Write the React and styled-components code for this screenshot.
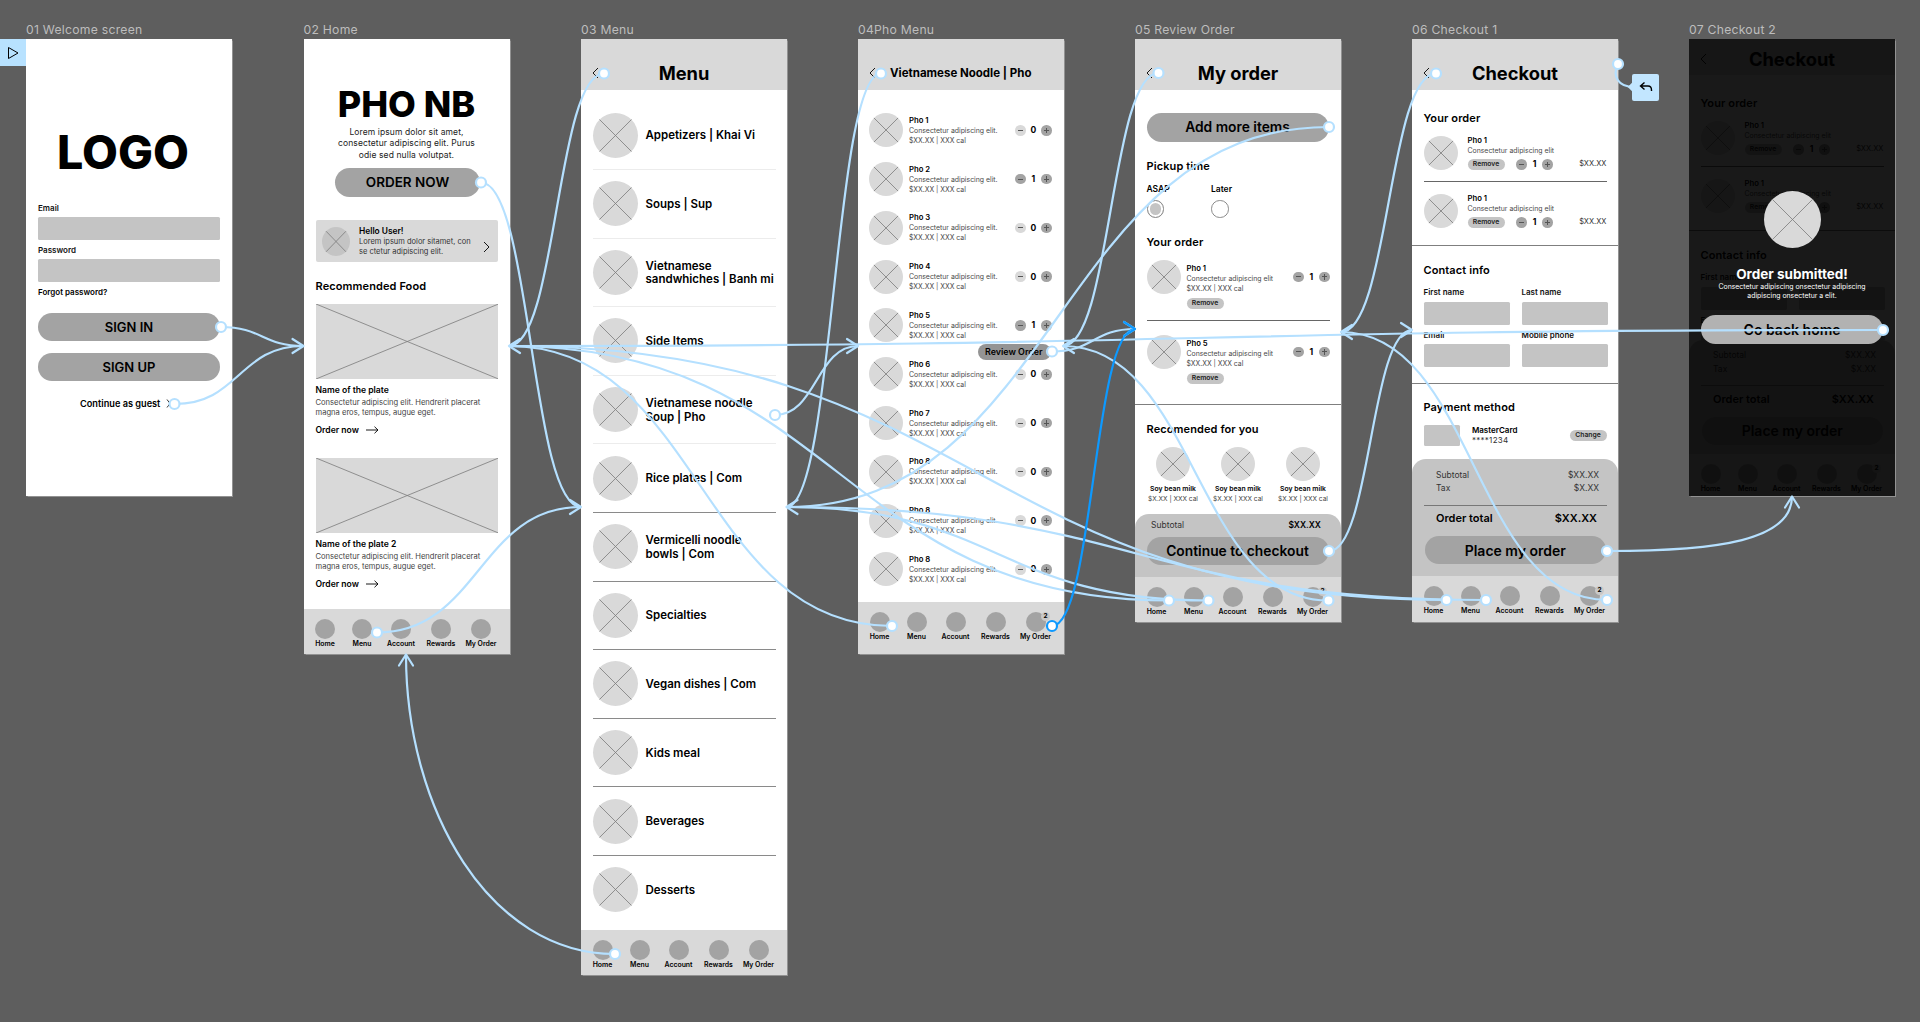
import React from "react";
import styled, { createGlobalStyle } from "styled-components";

const Global = createGlobalStyle`
  html, body { margin: 0; padding: 0; background: #5e5e5e; }
  body { font-family: Inter, "Liberation Sans", sans-serif; color: #000; }
  * { box-sizing: border-box; }
`;

const Canvas = styled.div`
  position: relative;
  width: 1920px;
  height: 1022px;
  background: #5e5e5e;
  overflow: hidden;
`;
const FrameSlot = styled.section`
  position: absolute;
  left: ${(p) => p.$x}px;
  top: ${(p) => p.$y}px;
  width: ${(p) => p.$w}px;
  height: ${(p) => p.$h}px;
`;
const FrameLabel = styled.div`
  position: absolute;
  left: 0;
  top: -17px;
  font-size: 12.2px;
  line-height: 15px;
  letter-spacing: 0.25px;
  color: #bdbdbd;
  white-space: nowrap;
`;
const Screen = styled.div`
  position: relative;
  width: 100%;
  height: 100%;
  background: #fff;
  display: flex;
  flex-direction: column;
  overflow: hidden;
  box-shadow: 0 0 1px 0.5px rgba(190, 190, 190, 0.55);
`;
const Padded = styled.div`
  display: flex;
  flex-direction: column;
  padding: 0 12px;
`;

/* shared atoms */
const ThumbBox = styled.div`
  flex: none;
  width: ${(p) => p.$w}px;
  height: ${(p) => p.$h}px;
  margin-top: ${(p) => p.$mt || 0}px;
  background: ${(p) => p.$bg || "#d9d9d9"};
  border-radius: ${(p) => (p.$rect ? "0" : "50%")};
  svg { display: block; width: 100%; height: 100%; }
`;
const Thumb = ({ w, h, rect, mt, bg }) => {
  const a = rect ? 0 : 14.5;
  const b = 100 - a;
  return (
    <ThumbBox $w={w} $h={h || w} $rect={rect} $mt={mt} $bg={bg}>
      <svg viewBox="0 0 100 100" preserveAspectRatio="none">
        <line x1={a} y1={a} x2={b} y2={b} stroke="#7b7b7b" strokeWidth="0.8" vectorEffect="non-scaling-stroke" />
        <line x1={b} y1={a} x2={a} y2={b} stroke="#7b7b7b" strokeWidth="0.8" vectorEffect="non-scaling-stroke" />
      </svg>
    </ThumbBox>
  );
};
const Pill = styled.div`
  flex: none;
  display: flex;
  align-items: center;
  justify-content: center;
  width: ${(p) => p.$w || 183}px;
  height: ${(p) => p.$h || 28.5}px;
  margin-top: ${(p) => p.$mt || 0}px;
  margin-left: ${(p) => p.$ml || 0}px;
  border-radius: 15px;
  background: ${(p) => p.$bg || "#a3a3a3"};
  font-size: ${(p) => p.$fs || 13}px;
  font-weight: 600;
  white-space: nowrap;
`;
const Field = styled.div`
  flex: none;
  height: ${(p) => p.$h || 22.5}px;
  margin-top: ${(p) => p.$mt || 4.5}px;
  background: #c4c4c4;
  border-radius: 1.5px;
`;
const FieldLabel = styled.div`
  font-size: 8px;
  line-height: 9px;
  font-weight: 600;
  margin-top: ${(p) => p.$mt || 0}px;
  color: #111;
`;
const Heading = styled.div`
  font-size: 11px;
  line-height: 12px;
  font-weight: 600;
  letter-spacing: 0.1px;
  margin-top: ${(p) => p.$mt || 0}px;
`;

/* header */
const TopBar = styled.header`
  flex: none;
  height: ${(p) => p.$h || 51}px;
  padding: ${(p) => p.$pt ?? 16}px 11px 0;
  background: #d9d9d9;
  display: grid;
  grid-template-columns: 24px 1fr 24px;
  align-items: center;
  svg { display: block; }
`;
const TopTitle = styled.h1`
  margin: 0 0 0 ${(p) => p.$ml || 0}px;
  font-size: ${(p) => p.$fs || 18.3}px;
  line-height: 24px;
  font-weight: 700;
  text-align: ${(p) => (p.$left ? "left" : "center")};
  white-space: nowrap;
`;
const Header = ({ title, left, fs, ml, h, pt }) => (
  <TopBar $h={h} $pt={pt}>
    <svg width="7" height="12" viewBox="0 0 7 12" fill="none">
      <path d="M6 1 1 6l5 5" stroke="#000" strokeWidth="0.9" />
    </svg>
    <TopTitle $left={left} $fs={fs} $ml={ml}>{title}</TopTitle>
  </TopBar>
);

/* bottom nav */
const NavBar = styled.nav`
  flex: none;
  margin-top: ${(p) => (p.$flush ? "0" : "auto")};
  height: ${(p) => p.$h || 45}px;
  padding: 9.5px 0 0 3.5px;
  background: #d9d9d9;
  display: grid;
  grid-template-columns: 36px 38px 40px 40px 40px;
  align-items: start;
`;
const NavItem = styled.div`
  display: flex;
  flex-direction: column;
  align-items: center;
`;
const NavDot = styled.div`
  position: relative;
  width: 20px;
  height: 20px;
  border-radius: 50%;
  background: #a3a3a3;
`;
const NavBadge = styled.span`
  position: absolute;
  left: 15.5px;
  top: 0;
  width: 9px;
  height: 9px;
  border-radius: 50%;
  background: #c8c8c8;
  font-size: 6.5px;
  line-height: 9px;
  font-weight: 700;
  text-align: center;
`;
const NavText = styled.div`
  margin-top: 1.5px;
  font-size: 6.9px;
  line-height: 8px;
  font-weight: 600;
  white-space: nowrap;
`;
const Nav = ({ badge, h, flush }) => (
  <NavBar $h={h} $flush={flush}>
    {["Home", "Menu", "Account", "Rewards", "My Order"].map((n, i) => (
      <NavItem key={n}>
        <NavDot>{badge && i === 4 && <NavBadge>2</NavBadge>}</NavDot>
        <NavText>{n}</NavText>
      </NavItem>
    ))}
  </NavBar>
);

/* stepper */
const StepGrid = styled.div`
  flex: none;
  align-self: ${(p) => (p.$mt ? "flex-start" : "center")};
  display: grid;
  grid-template-columns: 10.5px 15.5px 10.5px;
  align-items: center;
  justify-items: center;
  margin-left: ${(p) => p.$ml || "auto"};
  margin-top: ${(p) => p.$mt || 0}px;
`;
const StepBtn = styled.span`
  position: relative;
  display: block;
  width: 10.5px;
  height: 10.5px;
  border-radius: 50%;
  background: ${(p) => (p.$off ? "#d9d9d9" : "#a3a3a3")};
  &::before {
    content: "";
    position: absolute;
    left: 2.5px;
    right: 2.5px;
    top: 4.8px;
    height: 0.8px;
    background: #555;
  }
  ${(p) =>
    p.$plus &&
    `&::after {
      content: "";
      position: absolute;
      top: 2.5px;
      bottom: 2.5px;
      left: 4.8px;
      width: 0.8px;
      background: #555;
    }`}
`;
const StepValue = styled.span`
  font-size: 8.5px;
  line-height: 10px;
  font-weight: 700;
`;
const Stepper = ({ n, ml, mt }) => (
  <StepGrid $ml={ml} $mt={mt}>
    <StepBtn $off={n === 0} />
    <StepValue>{n}</StepValue>
    <StepBtn $plus />
  </StepGrid>
);

/* item text */
const ItemName = styled.div`
  font-size: 7.7px;
  line-height: 10px;
  font-weight: 600;
`;
const ItemLine = styled.div`
  font-size: 6.9px;
  line-height: 10px;
  color: #4a4a4a;
  white-space: nowrap;
`;
const Tag = styled.div`
  flex: none;
  width: ${(p) => p.$w || 37}px;
  height: 10.5px;
  margin-top: ${(p) => p.$mt || 0}px;
  margin-left: ${(p) => (p.$push ? "auto" : "0")};
  border-radius: 6px;
  background: #c4c4c4;
  font-size: 6.8px;
  line-height: 10.5px;
  font-weight: 600;
  text-align: center;
  color: #222;
`;

/* 01 */
const Logo = styled.div`
  margin-top: 91px;
  padding-right: 12px;
  font-size: 46.5px;
  line-height: 44px;
  font-weight: 800;
  text-align: center;
`;
const SmallLink = styled.div`
  font-size: 8px;
  line-height: 9px;
  font-weight: 600;
  margin-top: 6.5px;
`;
const GuestLink = styled.div`
  margin-top: 18px;
  padding-left: 42px;
  display: flex;
  align-items: center;
  gap: 6px;
  font-size: 9.2px;
  line-height: 10px;
  font-weight: 600;
`;
const Welcome = () => (
  <Screen>
    <Padded>
      <Logo>LOGO</Logo>
      <FieldLabel $mt={30}>Email</FieldLabel>
      <Field $mt={4} />
      <FieldLabel $mt={6}>Password</FieldLabel>
      <Field />
      <SmallLink>Forgot password?</SmallLink>
      <Pill $mt={16} $w={182} $h={28}>SIGN IN</Pill>
      <Pill $mt={11.6} $w={182} $h={28}>SIGN UP</Pill>
      <GuestLink>
        Continue as guest
        <svg width="5" height="9" viewBox="0 0 5 9" fill="none">
          <path d="M1 .5l3 4-3 4" stroke="#000" strokeWidth="0.8" />
        </svg>
      </GuestLink>
    </Padded>
  </Screen>
);

/* 02 */
const Brand = styled.div`
  margin-top: 47.5px;
  font-size: 36px;
  line-height: 35px;
  font-weight: 800;
  text-align: center;
`;
const BrandSub = styled.p`
  margin: 5px 0 0;
  font-size: 8.5px;
  line-height: 11.5px;
  text-align: center;
  color: #222;
  letter-spacing: 0.1px;
`;
const HelloCard = styled.div`
  flex: none;
  height: 42.4px;
  margin-top: 23px;
  padding: 7px 8px 0 6.5px;
  background: #d9d9d9;
  border-radius: 2px;
  display: flex;
  gap: 9px;
`;
const HelloTitle = styled.div`
  font-size: 8.4px;
  line-height: 10px;
  font-weight: 600;
  margin-top: -1px;
`;
const HelloText = styled.div`
  margin-top: 1px;
  font-size: 7.5px;
  line-height: 10px;
  color: #333;
  white-space: nowrap;
`;
const HelloChevron = styled.svg`
  flex: none;
  margin: 14px 0 0 auto;
`;
const FoodBlock = styled.article`
  display: flex;
  flex-direction: column;
  margin-top: ${(p) => p.$mt}px;
`;
const FoodName = styled.div`
  margin-top: 6px;
  font-size: 8.6px;
  line-height: 10px;
  font-weight: 600;
`;
const FoodText = styled.div`
  margin-top: 3px;
  font-size: 7.6px;
  line-height: 10px;
  color: #444;
  white-space: nowrap;
`;
const OrderLink = styled.div`
  margin-top: 7px;
  display: flex;
  align-items: center;
  gap: 7px;
  font-size: 8.6px;
  line-height: 10px;
  font-weight: 600;
`;
const Food = ({ name, mt }) => (
  <FoodBlock $mt={mt}>
    <Thumb rect w={182.5} h={75} />
    <FoodName>{name}</FoodName>
    <FoodText>
      Consectetur adipiscing elit. Hendrerit placerat
      <br />
      magna eros, tempus, augue eget.
    </FoodText>
    <OrderLink>
      Order now
      <svg width="13" height="8" viewBox="0 0 13 8" fill="none">
        <path d="M0 4h12M8.5.7 12 4 8.5 7.3" stroke="#000" strokeWidth="0.9" />
      </svg>
    </OrderLink>
  </FoodBlock>
);
const Home = () => (
  <Screen>
    <Padded>
      <Brand>PHO NB</Brand>
      <BrandSub>
        Lorem ipsum dolor sit amet,
        <br />
        consectetur adipiscing elit. Purus
        <br />
        odie sed nulla volutpat.
      </BrandSub>
      <Pill $mt={7} $ml={19.5} $w={145} $h={28.6} $fs={13.5}>ORDER NOW</Pill>
      <HelloCard>
        <Thumb w={28} h={29} bg="#c4c4c4" />
        <div>
          <HelloTitle>Hello User!</HelloTitle>
          <HelloText>
            Lorem ipsum dolor sitamet, con
            <br />
            se ctetur adipiscing elit.
          </HelloText>
        </div>
        <HelloChevron width="7" height="12" viewBox="0 0 7 12" fill="none">
          <path d="M1 1l5 5-5 5" stroke="#000" strokeWidth="0.9" />
        </HelloChevron>
      </HelloCard>
      <Heading $mt={18}>Recommended Food</Heading>
      <Food mt={12} name="Name of the plate" />
      <Food mt={23} name="Name of the plate 2" />
    </Padded>
    <Nav />
  </Screen>
);

/* 03 */
const MenuList = styled.ul`
  margin: 0;
  padding: 11.4px 11.5px 0;
  list-style: none;
`;
const MenuRow = styled.li`
  height: 68.6px;
  display: flex;
  align-items: center;
  gap: 8px;
  border-bottom: 1px solid ${(p) => (p.$last ? "transparent" : p.$dark ? "#8a8a8a" : "#ececec")};
`;
const MenuText = styled.div`
  padding-top: 2px;
  font-size: 11.5px;
  line-height: 13.7px;
  font-weight: 600;
  white-space: nowrap;
`;
const menuItems = [
  ["Appetizers | Khai Vi"],
  ["Soups | Sup"],
  ["Vietnamese", "sandwhiches | Banh mi"],
  ["Side Items"],
  ["Vietnamese noodle", "Soup | Pho"],
  ["Rice plates | Com"],
  ["Vermicelli noodle", "bowls | Com"],
  ["Specialties"],
  ["Vegan dishes | Com"],
  ["Kids meal"],
  ["Beverages"],
  ["Desserts"],
];
const MenuScreen = () => (
  <Screen>
    <Header title="Menu" />
    <MenuList>
      {menuItems.map((lines, i) => (
        <MenuRow key={lines[0]} $dark={i >= 5} $last={i === 11}>
          <Thumb w={45} />
          <MenuText>
            {lines.map((l) => (
              <div key={l}>{l}</div>
            ))}
          </MenuText>
        </MenuRow>
      ))}
    </MenuList>
    <Nav />
  </Screen>
);

/* 04 */
const PhoList = styled.ul`
  margin: 0;
  padding: 15.9px 12.5px 0 11px;
  list-style: none;
`;
const PhoRow = styled.li`
  height: 48.8px;
  display: flex;
  align-items: center;
  gap: 6px;
`;
const PhoInfo = styled.div`
  padding-top: 1px;
`;
const ReviewPill = styled(Pill)`
  position: absolute;
  left: 120px;
  top: 304.6px;
  justify-content: flex-start;
  padding-left: 7px;
  font-size: 8.9px;
`;
const phoRows = ["Pho 1", "Pho 2", "Pho 3", "Pho 4", "Pho 5", "Pho 6", "Pho 7", "Pho 8", "Pho 8", "Pho 8"];
const phoQty = [0, 1, 0, 0, 1, 0, 0, 0, 0, 0];
const PhoScreen = () => (
  <Screen>
    <Header title="Vietnamese Noodle | Pho" left fs={11.5} ml={-3} />
    <PhoList>
      {phoRows.map((name, i) => (
        <PhoRow key={i}>
          <Thumb w={34} />
          <PhoInfo>
            <ItemName>{name}</ItemName>
            <ItemLine>Consectetur adipiscing elit.</ItemLine>
            <ItemLine>$XX.XX | XXX cal</ItemLine>
          </PhoInfo>
          <Stepper n={phoQty[i]} />
        </PhoRow>
      ))}
    </PhoList>
    <ReviewPill $w={73} $h={16.4} $bg="#949494">Review Order</ReviewPill>
    <Nav h={52} badge />
  </Screen>
);

/* 05 */
const RadioRow = styled.div`
  display: grid;
  grid-template-columns: 64.5px 64.5px;
`;
const RadioCol = styled.div`
  display: flex;
  flex-direction: column;
  margin-top: 12px;
`;
const RadioLabel = styled.div`
  font-size: 8.5px;
  line-height: 10px;
  font-weight: 600;
`;
const Radio = styled.div`
  width: 17.5px;
  height: 17.5px;
  margin-top: 6.5px;
  border-radius: 50%;
  border: 1px solid #8c8c8c;
  background: ${(p) => (p.$on ? "#c4c4c4" : "#fff")};
  box-shadow: inset 0 0 0 ${(p) => (p.$on ? "2px #fff" : "0 #fff")};
`;
const OrderSection = styled.div`
  padding: ${(p) => p.$pt || 0}px 11.5px ${(p) => p.$pb || 0}px;
  border-bottom: ${(p) => (p.$rule ? "1px solid #7f7f7f" : "0")};
  display: flex;
  flex-direction: column;
`;
const OrderItem = styled.div`
  display: flex;
  gap: ${(p) => p.$gap || 6}px;
  margin-top: ${(p) => p.$mt || 0}px;
  padding-top: ${(p) => p.$pt || 0}px;
  padding-bottom: ${(p) => p.$pb || 0}px;
  border-bottom: ${(p) => (p.$rule ? "1px solid #666" : "0")};
`;
const OrderInfo = styled.div`
  padding-top: 3.5px;
`;
const RecGrid = styled.div`
  display: flex;
  justify-content: center;
  margin: 12.6px -6.5px 0;
`;
const RecCard = styled.div`
  width: 65px;
  display: flex;
  flex-direction: column;
  align-items: center;
  text-align: center;
`;
const RecName = styled.div`
  margin-top: 2.5px;
  font-size: 6.8px;
  line-height: 10px;
  font-weight: 600;
  white-space: nowrap;
`;
const RecPrice = styled.div`
  font-size: 6.6px;
  line-height: 10px;
  color: #444;
  white-space: nowrap;
`;
const BottomPanel = styled.div`
  flex: none;
  margin-top: auto;
  background: #c4c4c4;
  border-radius: 14px 14px 0 0;
  display: flex;
  flex-direction: column;
  padding-top: ${(p) => p.$pt}px;
  padding-bottom: ${(p) => p.$pb || 0}px;
`;
const PanelRow = styled.div`
  display: flex;
  justify-content: space-between;
  padding: 0 ${(p) => p.$pr}px 0 ${(p) => p.$pl}px;
  margin-top: ${(p) => p.$mt || 0}px;
  font-size: ${(p) => p.$fs}px;
  line-height: ${(p) => p.$lh}px;
  font-weight: ${(p) => p.$fw || 400};
  color: ${(p) => p.$c || "#333"};
`;
const Strong = styled.span`
  font-weight: 600;
  color: #000;
`;
const PanelGap = styled.div`
  height: ${(p) => p.$h}px;
`;
const Review = () => (
  <Screen>
    <Header title="My order" />
    <OrderSection $pb={20.5} $rule>
      <Pill $mt={23} $w={182} $fs={13.8}>Add more items</Pill>
      <Heading $mt={18}>Pickup time</Heading>
      <RadioRow>
        <RadioCol>
          <RadioLabel>ASAP</RadioLabel>
          <Radio $on />
        </RadioCol>
        <RadioCol>
          <RadioLabel>Later</RadioLabel>
          <Radio />
        </RadioCol>
      </RadioRow>
      <Heading $mt={18}>Your order</Heading>
      <OrderItem $mt={12.5} $pb={11.5} $rule>
        <Thumb w={34} />
        <OrderInfo>
          <ItemName>Pho 1</ItemName>
          <ItemLine>Consectetur adipiscing elit</ItemLine>
          <ItemLine>$XX.XX | XXX cal</ItemLine>
          <Tag $mt={4.5}>Remove</Tag>
        </OrderInfo>
        <Stepper n={1} mt={11.7} />
      </OrderItem>
      <OrderItem $pt={14}>
        <Thumb w={34} />
        <OrderInfo>
          <ItemName>Pho 5</ItemName>
          <ItemLine>Consectetur adipiscing elit</ItemLine>
          <ItemLine>$XX.XX | XXX cal</ItemLine>
          <Tag $mt={4.5}>Remove</Tag>
        </OrderInfo>
        <Stepper n={1} mt={11.7} />
      </OrderItem>
    </OrderSection>
    <OrderSection $pt={17.5}>
      <Heading>Recomended for you</Heading>
      <RecGrid>
        {[0, 1, 2].map((i) => (
          <RecCard key={i}>
            <Thumb w={34} />
            <RecName>Soy bean milk</RecName>
            <RecPrice>$X.XX | XXX cal</RecPrice>
          </RecCard>
        ))}
      </RecGrid>
    </OrderSection>
    <BottomPanel $pt={6}>
      <PanelRow $pl={16} $pr={20} $fs={8.5} $lh={10}>
        <span>Subtotal</span>
        <Strong>$XX.XX</Strong>
      </PanelRow>
      <Pill $mt={6.5} $ml={11.5} $w={182} $fs={13.8}>Continue to checkout</Pill>
      <PanelGap $h={12} />
    </BottomPanel>
    <Nav flush badge />
  </Screen>
);

/* 06 / 07 */
const CheckInfo = styled.div`
  flex: 1;
  min-width: 0;
`;
const CheckControls = styled.div`
  display: flex;
  align-items: center;
  margin-top: 3.2px;
`;
const Price = styled.div`
  margin-left: auto;
  font-size: 7.5px;
  line-height: 10px;
  color: #333;
`;
const NameGrid = styled.div`
  display: grid;
  grid-template-columns: 86px 86px;
  column-gap: 12px;
`;
const CardRow = styled.div`
  display: flex;
  align-items: center;
  margin-top: 11.5px;
`;
const CardSwatch = styled.div`
  width: 36.7px;
  height: 20.6px;
  background: #c4c4c4;
  border-radius: 1.5px;
`;
const CardText = styled.div`
  margin-left: 11.7px;
  font-size: 8px;
  line-height: 10.5px;
  font-weight: 600;
`;
const CardNumber = styled.div`
  font-size: 8px;
  line-height: 10.5px;
  font-weight: 400;
  color: #333;
  letter-spacing: 0.3px;
`;
const PanelRule = styled.div`
  height: 1px;
  margin: 8.6px 11px 0 12px;
  background: #777;
`;
const CheckItem = ({ pb, pt, rule, mt }) => (
  <OrderItem $gap={10} $mt={mt} $pb={pb} $pt={pt} $rule={rule}>
    <Thumb w={34} />
    <CheckInfo>
      <ItemName>Pho 1</ItemName>
      <ItemLine>Consectetur adipiscing elit</ItemLine>
      <CheckControls>
        <Tag>Remove</Tag>
        <Stepper n={1} ml="11.75px" />
        <Price>$XX.XX</Price>
      </CheckControls>
    </CheckInfo>
  </OrderItem>
);
const CheckSections = () => (
  <>
    <OrderSection $pt={21.5} $pb={17} $rule>
      <Heading>Your order</Heading>
      <CheckItem mt={12.5} pb={11} rule />
      <CheckItem pt={12} />
    </OrderSection>
    <OrderSection $pt={17.5} $pb={16} $rule>
      <Heading>Contact info</Heading>
      <NameGrid>
        <div>
          <FieldLabel $mt={12.8}>First name</FieldLabel>
          <Field $h={23} />
        </div>
        <div>
          <FieldLabel $mt={12.8}>Last name</FieldLabel>
          <Field $h={23} />
        </div>
        <div>
          <FieldLabel $mt={6}>Email</FieldLabel>
          <Field />
        </div>
        <div>
          <FieldLabel $mt={6}>Mobile phone</FieldLabel>
          <Field />
        </div>
      </NameGrid>
    </OrderSection>
  </>
);
const Summary = ({ pb }) => (
  <BottomPanel $pt={9.3} $pb={pb}>
    <PanelRow $pl={24} $pr={19} $fs={8.5} $lh={13.7}>
      <span>Subtotal</span>
      <span>$XX.XX</span>
    </PanelRow>
    <PanelRow $pl={24} $pr={19} $fs={8.5} $lh={13.7}>
      <span>Tax</span>
      <span>$X.XX</span>
    </PanelRow>
    <PanelRule />
    <PanelRow $pl={24} $pr={21} $fs={11} $lh={14} $fw={600} $c="#000" $mt={5.3}>
      <span>Order total</span>
      <span>$XX.XX</span>
    </PanelRow>
    <Pill $mt={11} $ml={12.5} $w={181.5} $fs={14}>Place my order</Pill>
  </BottomPanel>
);
const Checkout = () => (
  <Screen>
    <Header title="Checkout" />
    <CheckSections />
    <OrderSection $pt={17.5}>
      <Heading>Payment method</Heading>
      <CardRow>
        <CardSwatch />
        <CardText>
          MasterCard
          <CardNumber>****1234</CardNumber>
        </CardText>
        <Tag $w={37} $push>Change</Tag>
      </CardRow>
    </OrderSection>
    <Summary pb={11.6} />
    <Nav flush badge h={46} />
  </Screen>
);
const ClippedBody = styled.div`
  flex: 1;
  min-height: 0;
  overflow: hidden;
`;
const Dim = styled.div`
  position: absolute;
  inset: 0;
  background: rgba(0, 0, 0, 0.9);
`;
const Modal = styled.div`
  position: absolute;
  inset: 152px 0 0;
  display: flex;
  flex-direction: column;
  align-items: center;
`;
const ModalTitle = styled.div`
  margin-top: 17.5px;
  font-size: 13.5px;
  line-height: 16px;
  font-weight: 700;
  color: #fff;
  white-space: nowrap;
`;
const ModalText = styled.div`
  margin-top: 1.8px;
  font-size: 6.9px;
  line-height: 8.7px;
  text-align: center;
  color: #fff;
  white-space: nowrap;
`;
const Submitted = () => (
  <Screen>
    <Header title="Checkout" h={36} pt={3} />
    <ClippedBody>
      <CheckSections />
    </ClippedBody>
    <Summary pb={9} />
    <Nav flush badge h={42} />
    <Dim />
    <Modal>
      <Thumb w={57} />
      <ModalTitle>Order submitted!</ModalTitle>
      <ModalText>
        Consectetur adipiscing onsectetur adipiscing
        <br />
        adipiscing onsectetur a elit.
      </ModalText>
      <Pill $mt={14.3} $w={182} $h={28.6} $bg="#b2b2b2" $fs={14}>Go back home</Pill>
    </Modal>
  </Screen>
);

/* prototype chrome */
const FlowStart = styled.div`
  position: absolute;
  left: 0;
  top: 39px;
  width: 26px;
  height: 27px;
  background: #b8e2ff;
  display: flex;
  align-items: center;
  justify-content: center;
`;
const BackNode = styled.div`
  position: absolute;
  left: 1632px;
  top: 73.5px;
  width: 27px;
  height: 27px;
  border-radius: 2px;
  background: #c2e6ff;
  display: flex;
  align-items: center;
  justify-content: center;
  &::before {
    content: "";
    position: absolute;
    left: -3px;
    top: 10.5px;
    width: 6px;
    height: 6px;
    background: #c2e6ff;
    transform: rotate(45deg);
  }
`;
const WireLayer = styled.svg`
  position: absolute;
  left: 0;
  top: 0;
  pointer-events: none;
`;

const LIGHT = "#b5e0ff";
const BLUE = "#0d99ff";
const T = {
  f2l: [303.5, 346, "r"],
  f2r: [509, 346, "l"],
  f2b: [406, 654.5, "u"],
  f3l: [581, 507, "r"],
  f3r: [786.5, 507, "l"],
  f4l: [858, 346, "r"],
  f4r: [1063, 346, "l"],
  f5l: [1135, 329, "r"],
  f5r: [1341, 332, "l"],
  f6l: [1412, 330, "r"],
  f7b: [1792, 496.5, "u"],
};
const wires = [
  { from: [221, 327], to: T.f2l },
  { from: [174.5, 404], to: T.f2l },
  { from: [481, 182.5], to: T.f3l },
  { from: [377, 632.5], to: T.f3l },
  { from: [604, 73.5], to: T.f2r },
  { from: [775, 415], to: T.f4l },
  { from: [615, 954], to: T.f2b, d: "M615 954C490 954 406 810 406 654.5" },
  { from: [881, 73.5], to: T.f3r },
  { from: [892, 626], to: T.f2r },
  { from: [1052, 351.5], to: T.f5l },
  { from: [1158.5, 73], to: T.f4r },
  { from: [1329, 127], to: T.f3r },
  { from: [1329, 551], to: T.f6l },
  { from: [1436, 73.5], to: T.f5r },
  { from: [1169, 600.5], to: T.f2r },
  { from: [1208.5, 600.5], to: T.f3r },
  { from: [1328.5, 600.5], to: T.f4r },
  { from: [1446.5, 600], to: T.f2r },
  { from: [1486, 600], to: T.f3r },
  { from: [1607, 600], to: T.f5r },
  { from: [1607, 551], to: T.f7b, d: "M1607 551C1720 551 1792 540 1792 496.5" },
  { from: [1883, 330], to: T.f2r },
  { from: [1618, 64], d: "M1618 64C1612 76 1618 87 1634 87" },
  { from: [1052, 626], to: T.f5l, color: BLUE },
];
const wirePath = (w) => {
  if (w.d) return w.d;
  const [x1, y1] = w.from;
  const [x2, y2] = w.to;
  const m = (x1 + x2) / 2;
  return `M${x1} ${y1}C${m} ${y1} ${m} ${y2} ${x2} ${y2}`;
};
const headPath = ([x, y, dir]) => {
  if (dir === "r") return `M${x - 11} ${y - 7}L${x} ${y}L${x - 11} ${y + 7}`;
  if (dir === "l") return `M${x + 11} ${y - 7}L${x} ${y}L${x + 11} ${y + 7}`;
  return `M${x - 7} ${y + 11}L${x} ${y}L${x + 7} ${y + 11}`;
};
const Wires = () => (
  <WireLayer width="1920" height="1022" viewBox="0 0 1920 1022" fill="none">
    {wires.map((w, i) => (
      <path key={i} d={wirePath(w)} stroke={w.color || LIGHT} strokeWidth="2.2" />
    ))}
    {Object.values(T).map((t, i) => (
      <path key={i} d={headPath(t)} stroke={LIGHT} strokeWidth="2.2" strokeLinecap="round" strokeLinejoin="round" />
    ))}
    <path d={headPath(T.f5l)} stroke={BLUE} strokeWidth="2.2" strokeLinecap="round" strokeLinejoin="round" />
    {wires.map((w, i) => (
      <circle key={i} cx={w.from[0]} cy={w.from[1]} r="5" fill="#fff" stroke={w.color || LIGHT} strokeWidth="2.2" />
    ))}
  </WireLayer>
);

const frames = [
  { x: 26, y: 39, w: 206, h: 457, label: "01 Welcome screen", C: Welcome },
  { x: 303.5, y: 39, w: 206, h: 615, label: "02 Home", C: Home },
  { x: 581, y: 39, w: 206, h: 936, label: "03 Menu", C: MenuScreen },
  { x: 858, y: 39, w: 206, h: 615, label: "04Pho Menu", C: PhoScreen },
  { x: 1135, y: 39, w: 206, h: 583, label: "05 Review Order", C: Review },
  { x: 1412, y: 39, w: 206, h: 583, label: "06 Checkout 1", C: Checkout },
  { x: 1689, y: 39, w: 206, h: 457, label: "07 Checkout 2", C: Submitted },
];

export default function App() {
  return (
    <Canvas>
      <Global />
      {frames.map(({ x, y, w, h, label, C }) => (
        <FrameSlot key={label} $x={x} $y={y} $w={w} $h={h}>
          <FrameLabel>{label}</FrameLabel>
          <C />
        </FrameSlot>
      ))}
      <FlowStart>
        <svg width="12" height="14" viewBox="0 0 12 14" fill="none">
          <path d="M1.5 1.5v11L11 7z" stroke="#000" strokeWidth="1" strokeLinejoin="round" />
        </svg>
      </FlowStart>
      <Wires />
      <BackNode>
        <svg width="14" height="12" viewBox="0 0 14 12" fill="none">
          <path d="M5.5 1.5 1.5 5l4 3.5M1.5 5H9c2 0 3.5 1.5 3.5 4v1" stroke="#000" strokeWidth="1.4" />
        </svg>
      </BackNode>
    </Canvas>
  );
}
